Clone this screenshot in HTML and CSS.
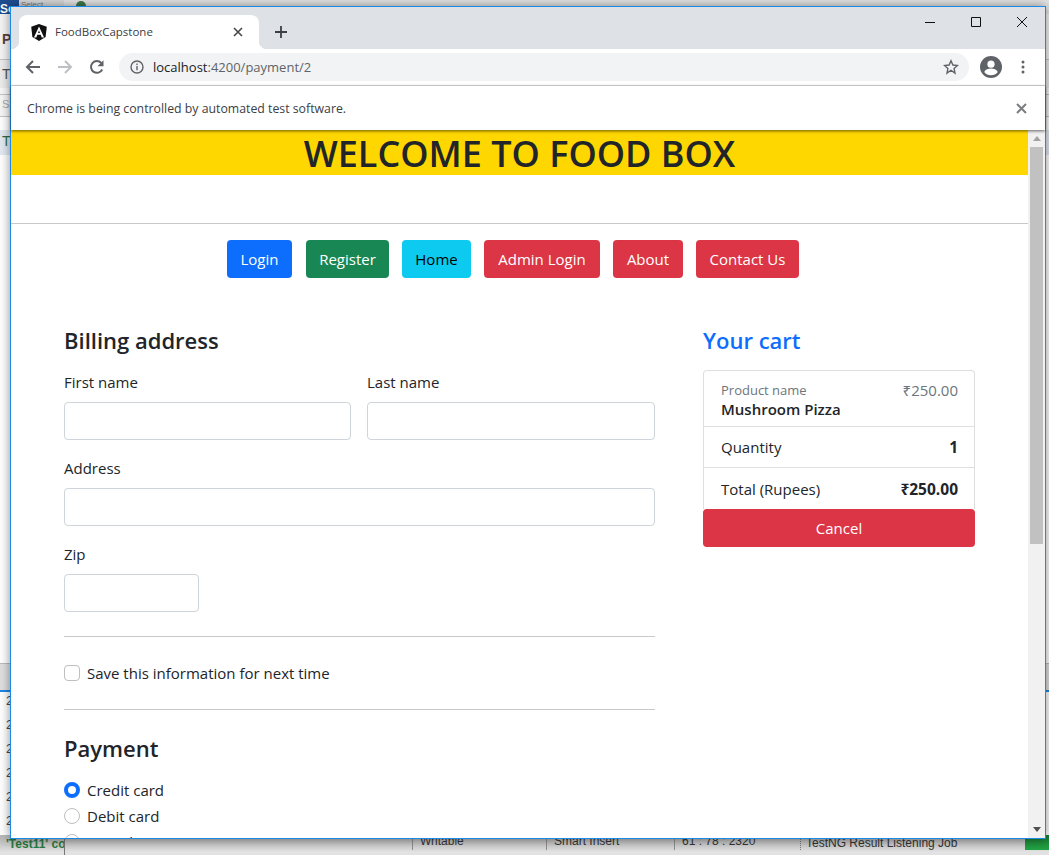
FILE: index.html
```html
<!DOCTYPE html>
<html lang="en">
<head>
    <meta charset="UTF-8">
    <meta name="viewport" content="width=device-width, initial-scale=1.0">
    <title>FoodBoxCapstone</title>
    <link rel="stylesheet" href="styles.css">
</head>
<body>
    <div class="desktop">
        <div class="desk-top">
            <span class="desk-badge">Se</span>
            <span class="desk-tab">Select</span>
            <svg class="desk-gear" width="12" height="6" viewBox="0 0 12 6"><path d="M1 6a5 5 0 0 1 10 0z" fill="#3f7a4a"/></svg>
        </div>
        <div class="desk-main">
            <div class="desk-pane">
                <div class="pane-row pane-title">P</div>
                <div class="pane-row pane-t">T</div>
                <div class="pane-row pane-s">S</div>
                <div class="pane-gap"></div>
                <div class="pane-row pane-green">T</div>
                <div class="pane-blank"></div>
                <div class="pane-tabs"></div>
                <div class="pane-log">
                    <span>2</span><span>2</span><span>2</span><span>2</span><span>2</span><span>2</span>
                </div>
            </div>
        </div>
        <div class="desk-status">
            <span class="st-msg">'Test11' co</span>
            <span class="st-gap"></span>
            <span class="st-cell st-write">Writable</span>
            <span class="st-cell st-insert">Smart Insert</span>
            <span class="st-cell st-pos">61 : 78 : 2320</span>
            <span class="st-job">TestNG Result Listening Job</span>
            <span class="st-bar"></span>
        </div>
    </div>

    <div class="window">
        <div class="titlebar">
            <div class="tab">
                <svg class="tab-logo" width="16" height="17" viewBox="0 0 16 17">
                    <path d="M8 0 .2 2.8l1.2 10.3L8 17l6.6-3.9 1.2-10.3z" fill="#111"/>
                    <path d="M8 2.4 2.9 13.4h2.4l1-2.6h3.4l1 2.6h2.4zM8 6.6l1 2.4H7z" fill="#fff"/>
                </svg>
                <span class="tab-title">FoodBoxCapstone</span>
                <svg class="tab-close" width="10" height="10" viewBox="0 0 10 10"><path d="M1 1l8 8M9 1 1 9" stroke="#44474b" stroke-width="1.6"/></svg>
            </div>
            <svg class="new-tab" width="14" height="14" viewBox="0 0 14 14"><path d="M7 1v12M1 7h12" stroke="#3c4043" stroke-width="1.8"/></svg>
            <div class="win-controls">
                <span class="win-btn"><svg width="10" height="10" viewBox="0 0 10 10"><path d="M0 5.5h10" stroke="#111"/></svg></span>
                <span class="win-btn"><svg width="10" height="10" viewBox="0 0 10 10"><path d="M.5.5h9v9h-9z" fill="none" stroke="#111"/></svg></span>
                <span class="win-btn"><svg width="10" height="10" viewBox="0 0 10 10"><path d="M0 0l10 10M10 0 0 10" stroke="#111"/></svg></span>
            </div>
        </div>

        <div class="toolbar">
            <span class="tool-btn"><svg width="16" height="16" viewBox="0 0 16 16"><path d="M15 8H2M8 2 2 8l6 6" fill="none" stroke="#5f6368" stroke-width="2"/></svg></span>
            <span class="tool-btn"><svg width="16" height="16" viewBox="0 0 16 16"><path d="M1 8h13M8 2l6 6-6 6" fill="none" stroke="#bdc1c6" stroke-width="2"/></svg></span>
            <span class="tool-btn"><svg width="16" height="16" viewBox="0 0 16 16"><path d="M13.2 10.5A5.9 5.9 0 1 1 12.3 4" fill="none" stroke="#5f6368" stroke-width="2"/><path d="M14.5 1.2v6h-6z" fill="#5f6368"/></svg></span>
            <div class="omnibox">
                <svg class="omni-info" width="14" height="14" viewBox="0 0 14 14"><circle cx="7" cy="7" r="6" fill="none" stroke="#5f6368" stroke-width="1.4"/><path d="M7 6v4.2M7 3.6v1.5" stroke="#5f6368" stroke-width="1.4"/></svg>
                <span class="omni-url"><span class="omni-host">localhost</span>:4200/payment/2</span>
                <svg class="omni-star" width="16" height="16" viewBox="0 0 16 16"><path d="M8 1.8l1.9 4.2 4.6.5-3.4 3.1.9 4.5L8 11.3l-4 2.8.9-4.5L1.5 6.5l4.6-.5z" fill="none" stroke="#5f6368" stroke-width="1.4"/></svg>
            </div>
            <span class="tool-btn"><svg width="22" height="22" viewBox="0 0 22 22"><circle cx="11" cy="11" r="11" fill="#5f6368"/><circle cx="11" cy="8.2" r="3.6" fill="#fff"/><path d="M4.2 16c1.4-2.4 4-3.4 6.8-3.4s5.4 1 6.8 3.4a8.8 8.8 0 0 1-13.6 0z" fill="#fff"/></svg></span>
            <span class="tool-btn"><svg width="4" height="14" viewBox="0 0 4 14"><circle cx="2" cy="2" r="1.5" fill="#5f6368"/><circle cx="2" cy="7" r="1.5" fill="#5f6368"/><circle cx="2" cy="12" r="1.5" fill="#5f6368"/></svg></span>
        </div>

        <div class="infobar">
            <span>Chrome is being controlled by automated test software.</span>
            <svg width="11" height="11" viewBox="0 0 11 11"><path d="M1 1l9 9M10 1l-9 9" stroke="#7a7d81" stroke-width="2"/></svg>
        </div>

        <div class="viewport">
            <div class="page">
                <h1 class="banner">WELCOME TO FOOD BOX</h1>
                <hr class="rule">
                <nav class="nav-buttons">
                    <a class="btn btn-login" href="#">Login</a>
                    <a class="btn btn-register" href="#">Register</a>
                    <a class="btn btn-home" href="#">Home</a>
                    <a class="btn btn-admin" href="#">Admin Login</a>
                    <a class="btn btn-about" href="#">About</a>
                    <a class="btn btn-contact" href="#">Contact Us</a>
                </nav>

                <div class="checkout">
                    <form class="billing">
                        <h4>Billing address</h4>
                        <div class="name-row">
                            <div>
                                <label for="first">First name</label>
                                <input type="text" id="first">
                            </div>
                            <div>
                                <label for="last">Last name</label>
                                <input type="text" id="last">
                            </div>
                        </div>
                        <div class="field">
                            <label for="address">Address</label>
                            <input type="text" id="address">
                        </div>
                        <div class="field zip">
                            <label for="zip">Zip</label>
                            <input type="text" id="zip">
                        </div>
                        <hr class="rule form-rule">
                        <div class="check-row">
                            <input type="checkbox" id="save">
                            <label for="save">Save this information for next time</label>
                        </div>
                        <hr class="rule form-rule">
                        <h4 class="pay-title">Payment</h4>
                        <div class="check-row radio-row">
                            <input type="radio" name="pay" id="credit" checked>
                            <label for="credit">Credit card</label>
                        </div>
                        <div class="check-row radio-row">
                            <input type="radio" name="pay" id="debit">
                            <label for="debit">Debit card</label>
                        </div>
                        <div class="check-row radio-row">
                            <input type="radio" name="pay" id="paypal">
                            <label for="paypal">PayPal</label>
                        </div>
                    </form>

                    <aside class="cart">
                        <h4 class="cart-title">Your cart</h4>
                        <ul class="cart-list">
                            <li class="cart-item item-product">
                                <div>
                                    <div class="product-label">Product name</div>
                                    <div class="product-name">Mushroom Pizza</div>
                                </div>
                                <span class="product-price">₹250.00</span>
                            </li>
                            <li class="cart-item">
                                <span>Quantity</span>
                                <strong>1</strong>
                            </li>
                            <li class="cart-item">
                                <span>Total (Rupees)</span>
                                <strong>₹250.00</strong>
                            </li>
                        </ul>
                        <a class="btn btn-cancel" href="#">Cancel</a>
                    </aside>
                </div>
            </div>
            <div class="scrollbar">
                <span class="arrow-up"></span>
                <span class="thumb"></span>
                <span class="arrow-down"></span>
            </div>
        </div>
    </div>
</body>
</html>
```

FILE: styles.css
```css
* {
    box-sizing: border-box;
}
html, body {
    margin: 0;
    height: 855px;
    overflow: hidden;
}
body {
    font-family: "Open Sans", "Noto Sans", "DejaVu Sans", sans-serif;
    font-size: 15px;
    color: #212529;
    background-color: #f0f0f0;
}

/* desktop behind the browser window */
.desktop {
    height: 855px;
    display: flex;
    flex-direction: column;
    font-family: "Liberation Sans", sans-serif;
    overflow: hidden;
}
.desk-top {
    height: 14px;
    flex: none;
    display: flex;
    background-color: #e4e4e4;
}
.desk-badge {
    width: 19px;
    padding-top: 4px;
    background-color: #1d4e92;
    color: #fff;
    font-size: 12px;
    font-weight: bold;
    line-height: 10px;
}
.desk-tab {
    width: 45px;
    padding-left: 2px;
    font-size: 8px;
    line-height: 10px;
    color: #777;
    background-color: #d8d8d8;
}
.desk-gear {
    margin-left: 11px;
}
.desk-main {
    flex: 1;
    min-height: 0;
    background-color: #fff;
}
.desk-pane {
    display: flex;
    flex-direction: column;
    height: 100%;
}
.pane-row {
    padding-left: 2px;
    overflow: hidden;
}
.pane-title {
    height: 46px;
    padding-top: 17px;
    background-color: #f4f4f4;
    border-bottom: 1px solid #c4c4c4;
    font-weight: bold;
    font-size: 14px;
    color: #5c3f3f;
}
.pane-t {
    height: 35px;
    padding-top: 6px;
    background: linear-gradient(#ececec 28px, #f8f8f8 28px);
    border-bottom: 1px solid #c4c4c4;
    color: #555;
    font-size: 14px;
}
.pane-s {
    height: 22px;
    padding-top: 3px;
    background-color: #f6f6f6;
    border-bottom: 1px solid #c4c4c4;
    color: #aaa;
    font-size: 11px;
}
.pane-gap {
    height: 13px;
    flex: none;
}
.pane-green {
    height: 25px;
    padding-top: 3px;
    background-color: #e2e9f0;
    color: #2e6b4a;
    font-size: 14px;
}
.pane-blank {
    height: 508px;
    flex: none;
}
.pane-tabs {
    height: 29px;
    flex: none;
    background-color: #e0e0e0;
    border-top: 1px solid #bbb;
    border-bottom: 2px solid #1e88e5;
}
.pane-log {
    display: flex;
    flex-direction: column;
    gap: 11px;
    padding: 2px 0 0 6px;
    color: #444;
    font-size: 13px;
    line-height: 13px;
}
.desk-status {
    height: 20px;
    flex: none;
    display: flex;
    font-size: 12px;
    line-height: 13px;
    color: #333;
    background: linear-gradient(#b8b8b8 3px, #c4c4c4 8px, #e2e2e2 17px);
}
.st-msg {
    width: 65px;
    flex: none;
    padding: 3px 0 0 6px;
    overflow: hidden;
    white-space: nowrap;
    border-right: 1px solid #777;
    color: #2a7a3e;
    font-size: 12px;
    font-weight: bold;
}
.st-gap {
    width: 347px;
    flex: none;
}
.st-cell {
    height: 15px;
    flex: none;
    border-left: 1px solid #8c8c8c;
    padding-left: 7px;
}
.st-write {
    width: 134px;
}
.st-insert {
    width: 128px;
}
.st-pos {
    width: 126px;
}
.st-job {
    width: 225px;
    flex: none;
    height: 15px;
    padding: 2px 0 0 5px;
    line-height: 13px;
    border-left: 1px dotted #777;
}
.st-bar {
    width: 24px;
    height: 15px;
    margin-left: auto;
    background: linear-gradient(#1a7a32, #22a544);
}

/* browser window */
.window {
    position: absolute;
    left: 10px;
    top: 6px;
    width: 1036px;
    height: 833px;
    display: flex;
    flex-direction: column;
    border: 1px solid #1e88e5;
    background-color: #fff;
    box-shadow: 0 0 10px rgba(0, 0, 0, 0.45);
}
.titlebar {
    height: 42px;
    flex: none;
    display: flex;
    align-items: flex-end;
    padding-left: 8px;
    background-color: #dee1e6;
}
.tab {
    position: relative;
    width: 240px;
    height: 34px;
    display: flex;
    align-items: center;
    padding: 0 16px 0 12px;
    background-color: #fff;
    border-radius: 8px 8px 0 0;
}
.tab::before,
.tab::after {
    content: "";
    position: absolute;
    bottom: 0;
    width: 8px;
    height: 8px;
}
.tab::before {
    left: -8px;
    background: radial-gradient(circle at 0 0, transparent 8px, #fff 8.5px);
}
.tab::after {
    right: -8px;
    background: radial-gradient(circle at 100% 0, transparent 8px, #fff 8.5px);
}
.tab-title {
    flex: 1;
    margin-left: 8px;
    padding-bottom: 2px;
    font-size: 11.5px;
    color: #3c4043;
}
.new-tab {
    margin: 0 0 10px 15px;
}
.win-controls {
    display: flex;
    margin-left: auto;
    align-self: flex-start;
}
.win-btn {
    width: 46px;
    height: 29px;
    display: flex;
    align-items: center;
    justify-content: center;
}
.toolbar {
    height: 37px;
    flex: none;
    display: flex;
    align-items: center;
    padding: 0 6px 1px;
    border-bottom: 1px solid #d8d8da;
}
.tool-btn {
    width: 32px;
    height: 32px;
    flex: none;
    display: flex;
    align-items: center;
    justify-content: center;
}
.omnibox {
    flex: 1;
    height: 28px;
    margin: 0 6px;
    display: flex;
    align-items: center;
    padding: 0 10px 0 11px;
    border-radius: 14px;
    background-color: #f1f3f4;
}
.omni-url {
    flex: 1;
    margin-left: 9px;
    padding-top: 1px;
    font-size: 13px;
    color: #5f6368;
}
.omni-host {
    color: #202124;
}
.infobar {
    position: relative;
    z-index: 1;
    height: 44px;
    flex: none;
    display: flex;
    align-items: center;
    justify-content: space-between;
    padding: 0 18px 0 16px;
    font-size: 12.3px;
    color: #3c4043;
    background-color: #fff;
    box-shadow: 0 1px 3px rgba(0, 0, 0, 0.6);
}

/* page inside the browser */
.viewport {
    flex: 1;
    min-height: 0;
    display: flex;
}
.page {
    flex: 1;
    min-width: 0;
    overflow: hidden;
}
.banner {
    margin: 0 0 48px;
    height: 45px;
    font-size: 36px;
    font-weight: 600;
    line-height: 48px;
    text-align: center;
    background-color: #ffd700;
}
.rule {
    margin: 0;
    height: 1px;
    border: none;
    background-color: #c9c9c9;
}
.nav-buttons {
    display: flex;
    padding: 16px 0 47px 216px;
}
.btn {
    display: block;
    height: 38px;
    border-radius: 4px;
    line-height: 38px;
    text-align: center;
    text-decoration: none;
    color: #fff;
}
.btn-login {
    width: 65px;
    margin-right: 14px;
    background-color: #0d6efd;
}
.btn-register {
    width: 83px;
    margin-right: 13px;
    background-color: #198754;
}
.btn-home {
    width: 69px;
    margin-right: 13px;
    color: #000;
    background-color: #0dcaf0;
}
.btn-admin {
    width: 116px;
    margin-right: 13px;
    background-color: #dc3545;
}
.btn-about {
    width: 70px;
    margin-right: 13px;
    background-color: #dc3545;
}
.btn-contact {
    width: 103px;
    background-color: #dc3545;
}
.btn-cancel {
    background-color: #dc3545;
}
.checkout {
    display: flex;
    gap: 48px;
    padding-left: 53px;
}
.billing {
    width: 591px;
    flex: none;
}
.cart {
    width: 272px;
    flex: none;
}
h4 {
    margin: 0 0 16px;
    font-size: 22px;
    font-weight: 600;
    line-height: 30px;
    height: 29px;
}
.pay-title {
    margin-bottom: 15px;
    line-height: 28px;
}
.cart-title {
    color: #0d6efd;
}
label {
    display: block;
    margin-bottom: 8px;
    line-height: 24px;
}
input[type="text"] {
    display: block;
    width: 100%;
    height: 38px;
    border: 1px solid #ced4da;
    border-radius: 4px;
    background-color: #fff;
}
.name-row {
    display: grid;
    grid-template-columns: 287px 288px;
    gap: 16px;
}
.field {
    margin-top: 16px;
}
.zip {
    width: 135px;
}
.form-rule {
    margin: 24px 0;
}
.check-row {
    display: flex;
    align-items: center;
    gap: 7px;
    height: 24px;
}
.check-row label {
    margin: 0;
}
.radio-row {
    margin-bottom: 2px;
}
.check-row input {
    width: 16px;
    height: 16px;
    margin: 0;
    flex: none;
    appearance: none;
    border: 1px solid #bfbfbf;
    border-radius: 4px;
    background-color: #fff;
}
.radio-row input {
    border-radius: 50%;
}
.radio-row input:checked {
    border: 4px solid #0d6efd;
}
.cart-list {
    margin: 0;
    padding: 0;
    list-style: none;
    border: 1px solid #dfdfdf;
    border-bottom: none;
    border-radius: 4px 4px 0 0;
}
.cart-item {
    display: flex;
    justify-content: space-between;
    align-items: center;
    height: 41px;
    padding: 0 16px 0 17px;
    border-bottom: 1px solid #dfdfdf;
}
.cart-item strong {
    font-size: 15.5px;
    font-weight: 700;
}
.item-product {
    height: 56px;
    align-items: flex-start;
    padding-top: 9px;
}
.product-label {
    font-size: 13px;
    line-height: 20px;
    color: #6c757d;
}
.product-name {
    font-size: 15px;
    font-weight: 600;
    line-height: 18px;
}
.product-price {
    line-height: 20px;
    color: #6c757d;
}
.cart-item:last-child {
    border-bottom: none;
}
.scrollbar {
    width: 17px;
    flex: none;
    display: flex;
    flex-direction: column;
    align-items: center;
    background-color: #f1f1f1;
}
.thumb {
    width: 13px;
    height: 397px;
    margin-top: 6px;
    background-color: #c1c1c1;
}
.arrow-up,
.arrow-down {
    width: 0;
    height: 0;
    border-left: 4px solid transparent;
    border-right: 4px solid transparent;
}
.arrow-up {
    margin-top: 6px;
    border-bottom: 5px solid #a3a3a3;
}
.arrow-down {
    margin-top: auto;
    margin-bottom: 6px;
    border-top: 5px solid #505050;
}
```
